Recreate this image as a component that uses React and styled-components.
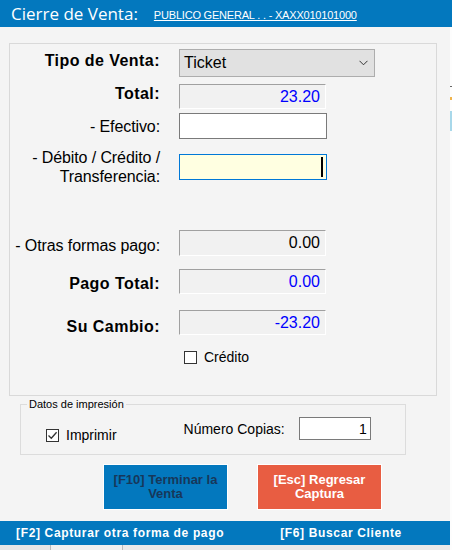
import React from 'react';
import styled, { createGlobalStyle } from 'styled-components';

const GlobalStyle = createGlobalStyle`
  html, body {
    margin: 0;
    padding: 0;
  }
  body {
    font-family: "Liberation Sans", Arial, sans-serif;
    color: #000;
  }
`;

const Screen = styled.div`
  width: 452px;
  height: 550px;
  overflow: hidden;
  background: #f4f4f4;
  display: flex;
  flex-direction: column;
`;

const Header = styled.header`
  height: 27px;
  flex: none;
  background: #0378be;
  display: flex;
  align-items: center;
  padding-left: 11px;
`;

const Title = styled.h1`
  margin: 0;
  font-family: "Open Sans", "Noto Sans", sans-serif;
  font-size: 17px;
  font-weight: 400;
  color: #fff;
  line-height: 27px;
`;

const ClientLink = styled.a`
  margin-left: 16px;
  margin-top: 3px;
  font-size: 11px;
  letter-spacing: -0.2px;
  color: #fff;
  text-decoration: underline;
`;

const Body = styled.div`
  flex: 1;
  display: flex;
`;

const Main = styled.main`
  width: 450px;
  display: flex;
  flex-direction: column;
`;

const SideStrip = styled.div`
  flex: 1;
  background: #fdfdfd;
  display: flex;
  flex-direction: column;
`;

const StripMark = styled.div`
  height: ${({ $h }) => $h}px;
  margin-top: ${({ $mt }) => $mt}px;
  background: ${({ $color }) => $color};
`;

const Panel = styled.section`
  margin: 16px 0 0 9px;
  width: 426px;
  height: 346px;
  border: 1px solid #d9d9d9;
  padding-top: 5px;
  box-sizing: content-box;
`;

const Row = styled.div`
  display: flex;
  align-items: flex-start;
  margin-top: ${({ $mt }) => $mt || 0}px;
`;

const Label = styled.label`
  width: 150px;
  flex: none;
  text-align: right;
  font-size: 16px;
  line-height: ${({ $lh }) => $lh || 18}px;
  font-weight: ${({ $bold }) => ($bold ? 700 : 400)};
  letter-spacing: ${({ $bold }) => ($bold ? 0.45 : -0.1)}px;
  padding-top: ${({ $pt }) => $pt || 0}px;
  color: #000;
`;

const Select = styled.div`
  margin-left: 19px;
  background: #e1e1e1;
  border: 1px solid #adadad;
  display: flex;
  align-items: center;
  justify-content: space-between;
  padding: 0 6px 0 4px;
  box-sizing: border-box;
  width: 196px;
  height: 28px;
  font-size: 16px;
`;

const ValueBox = styled.div`
  margin-left: 19px;
  margin-top: ${({ $mt }) => $mt || 0}px;
  width: 147px;
  height: ${({ $h }) => $h || 25}px;
  box-sizing: border-box;
  border-style: solid;
  border-width: 1px;
  border-color: #a0a0a0 #ffffff #ffffff #a0a0a0;
  background: #f1f1f1;
  font-size: 16px;
  text-align: right;
  padding-right: 5px;
  line-height: ${({ $h }) => ($h || 25) - 2}px;
  color: ${({ $blue }) => ($blue ? '#0000ff' : '#000')};
`;

const Input = styled.div`
  margin-left: ${({ $ml }) => ($ml === undefined ? 19 : $ml)}px;
  margin-top: ${({ $mt }) => $mt || 0}px;
  width: ${({ $w }) => $w || 148}px;
  height: ${({ $h }) => $h || 26}px;
  box-sizing: border-box;
  border: 1px solid ${({ $focused }) => ($focused ? '#0078d7' : '#7a7a7a')};
  background: ${({ $focused }) => ($focused ? '#ffffe1' : '#fff')};
  display: flex;
  align-items: center;
  justify-content: flex-end;
  padding-right: 3px;
  font-size: 14px;
`;

const Caret = styled.span`
  width: 2px;
  height: 20px;
  background: #000;
`;

const CheckRow = styled.div`
  display: flex;
  align-items: center;
  gap: 7px;
  margin-left: ${({ $ml }) => $ml || 0}px;
  margin-top: ${({ $mt }) => $mt || 0}px;
  font-size: 14px;
`;

const Box = styled.span`
  width: 13px;
  height: 13px;
  box-sizing: border-box;
  border: 1px solid #333;
  background: #fff;
  display: flex;
  align-items: center;
  justify-content: center;
`;

const PrintGroup = styled.fieldset`
  margin: 2px 0 0 20px;
  width: 386px;
  box-sizing: border-box;
  border: 1px solid #dcdcdc;
  padding: 0;
  min-width: 0;
`;

const Legend = styled.legend`
  margin-left: 6px;
  padding: 0 2px;
  font-size: 11px;
  line-height: 13px;
  color: #000;
`;

const PrintContent = styled.div`
  height: 43px;
  display: flex;
  align-items: flex-start;
`;

const CopiesGroup = styled.div`
  display: flex;
  align-items: center;
  margin-left: 67px;
  margin-top: 6px;
  font-size: 14px;
`;

const Actions = styled.div`
  display: flex;
  gap: 29px;
  padding-left: 103px;
  margin-top: 9px;
`;

const ActionButton = styled.button`
  width: 125px;
  height: 46px;
  border: 1px solid #ffffff;
  background: ${({ $tone }) => ($tone === 'danger' ? '#e85d42' : '#0378be')};
  color: ${({ $tone }) => ($tone === 'danger' ? '#ffffff' : '#17375a')};
  font-family: "Liberation Sans", Arial, sans-serif;
  font-weight: 700;
  font-size: 13px;
  line-height: 14px;
  padding: 0 6px;
`;

const BottomBar = styled.footer`
  margin-top: 11px;
  height: 24px;
  background: #0378be;
  display: flex;
  align-items: center;
  color: #fff;
  font-weight: 700;
  font-size: 12px;
  letter-spacing: 0.65px;
`;

const BarItem = styled.span`
  margin-left: ${({ $ml }) => $ml}px;
`;

const BottomEdge = styled.div`
  flex: 1;
  background: linear-gradient(90deg, #e6e6e6 0 50px, #bbb 50px 51px, #f0f0f0 51px 122px, #bbb 122px 123px, #e9e9e9 123px);
`;

const Chevron = () => (
  <svg width="9" height="6" viewBox="0 0 9 6">
    <path d="M0.5 0.8 L4.5 4.8 L8.5 0.8" fill="none" stroke="#333" strokeWidth="1" />
  </svg>
);

const Tick = () => (
  <svg width="11" height="11" viewBox="0 0 11 11">
    <path d="M1.5 5.5 L4.3 8.3 L9.6 2.3" fill="none" stroke="#333" strokeWidth="1.3" />
  </svg>
);

export default function App() {
  return (
    <Screen>
      <GlobalStyle />
      <Header>
        <Title>Cierre de Venta:</Title>
        <ClientLink href="#">PUBLICO GENERAL . . - XAXX010101000</ClientLink>
      </Header>
      <Body>
        <Main>
          <Panel>
            <Row>
              <Label $bold $pt={3}>Tipo de Venta:</Label>
              <Select>
                <span>Ticket</span>
                <Chevron />
              </Select>
            </Row>
            <Row $mt={7}>
              <Label $bold $pt={1}>Total:</Label>
              <ValueBox $blue>23.20</ValueBox>
            </Row>
            <Row $mt={4}>
              <Label $pt={5}>- Efectivo:</Label>
              <Input />
            </Row>
            <Row $mt={9}>
              <Label $lh={19}>- Débito / Crédito / Transferencia:</Label>
              <Input $focused $mt={6} $h={26}>
                <Caret />
              </Input>
            </Row>
            <Row $mt={44}>
              <Label $pt={7}>- Otras formas pago:</Label>
              <ValueBox $h={26}>0.00</ValueBox>
            </Row>
            <Row $mt={13}>
              <Label $bold $pt={6}>Pago Total:</Label>
              <ValueBox $blue>0.00</ValueBox>
            </Row>
            <Row $mt={16}>
              <Label $bold $pt={8}>Su Cambio:</Label>
              <ValueBox $blue>-23.20</ValueBox>
            </Row>
            <CheckRow $ml={174} $mt={13}>
              <Box />
              <span>Crédito</span>
            </CheckRow>
          </Panel>

          <PrintGroup>
            <Legend>Datos de impresión</Legend>
            <PrintContent>
              <CheckRow $ml={25} $mt={16}>
                <Box>
                  <Tick />
                </Box>
                <span>Imprimir</span>
              </CheckRow>
              <CopiesGroup>
                <span>Número Copias:</span>
                <Input $ml={14} $w={72} $h={23}>1</Input>
              </CopiesGroup>
            </PrintContent>
          </PrintGroup>

          <Actions>
            <ActionButton>[F10] Terminar la Venta</ActionButton>
            <ActionButton $tone="danger">[Esc] Regresar Captura</ActionButton>
          </Actions>

          <BottomBar>
            <BarItem $ml={16}>[F2] Capturar otra forma de pago</BarItem>
            <BarItem $ml={56}>[F6] Buscar Cliente</BarItem>
          </BottomBar>
          <BottomEdge />
        </Main>
        <SideStrip>
          <StripMark $mt={59} $h={1} $color="#666" />
          <StripMark $mt={10} $h={3} $color="#f0b44c" />
          <StripMark $mt={11} $h={20} $color="#a8d8ea" />
        </SideStrip>
      </Body>
    </Screen>
  );
}
